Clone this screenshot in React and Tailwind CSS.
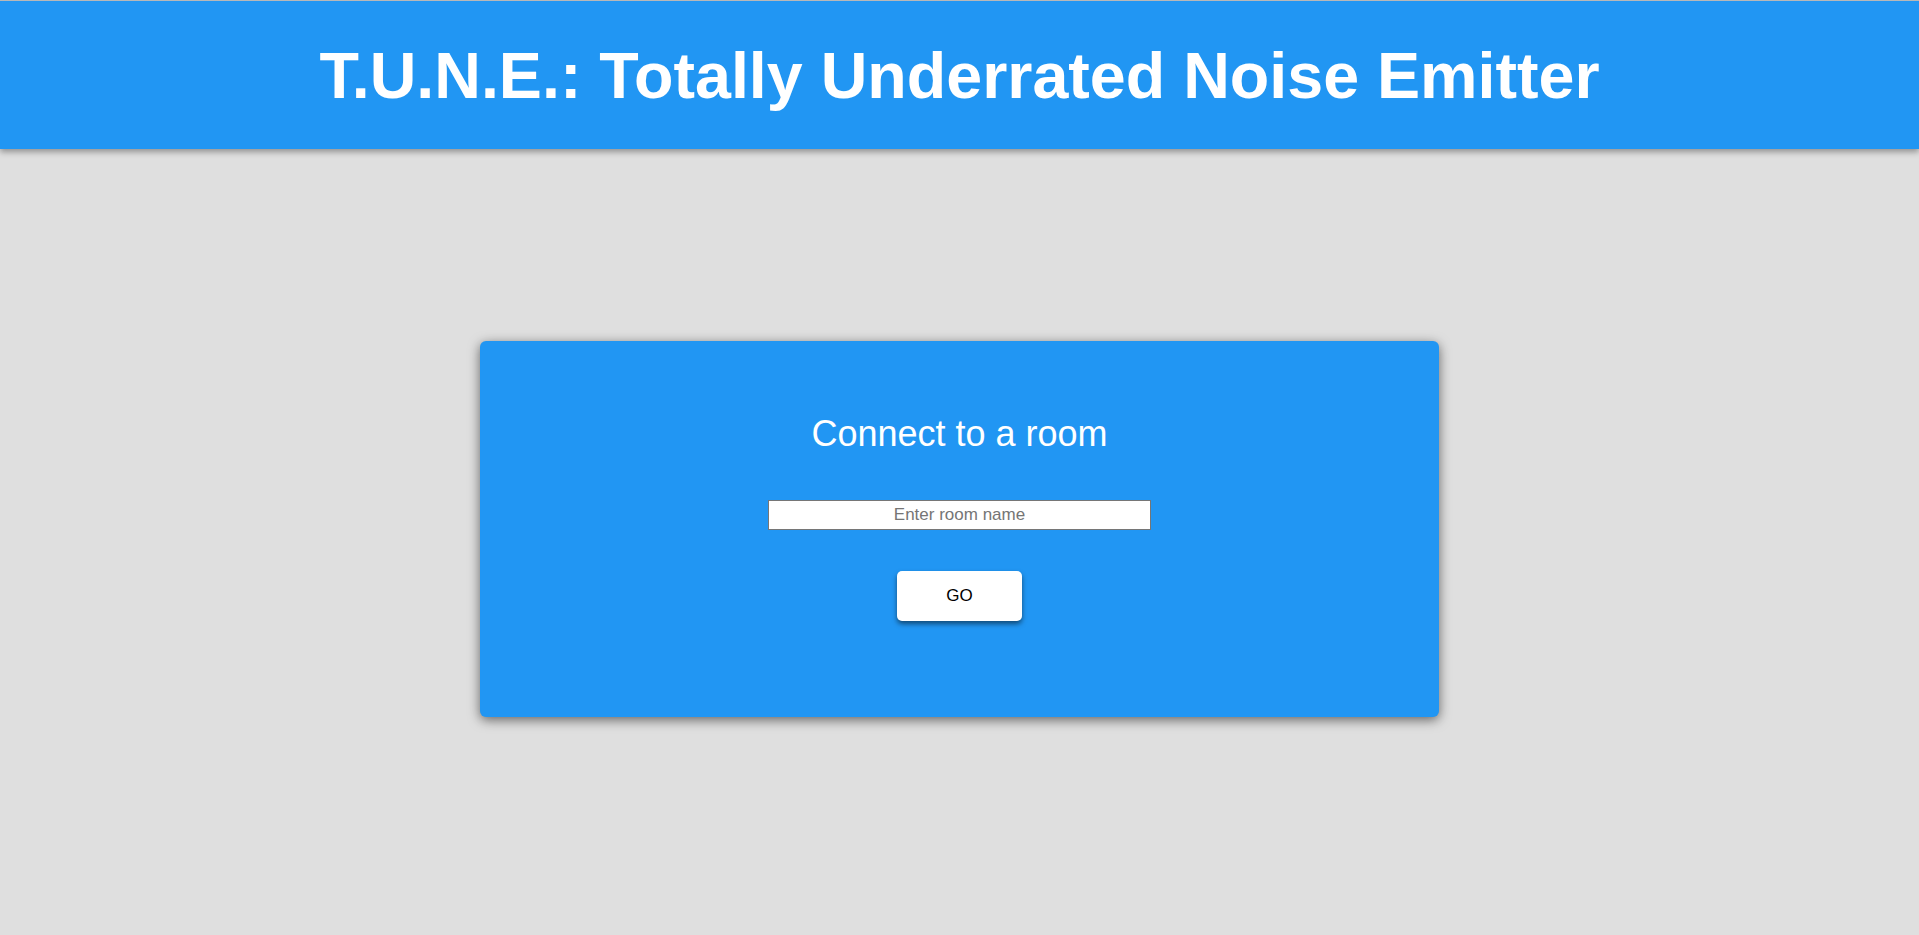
export default function App() {
  return (
    <div className="min-h-[935px] bg-[#dfdfdf] flex flex-col" style={{ fontFamily: '"Liberation Sans", Arial, sans-serif' }}>
      <header className="h-[149px] border-t border-[#b8b8b8] bg-[#2196f3] flex items-center justify-center pt-[2px] shadow-[0_3px_6px_rgba(0,0,0,0.35)] relative z-10">
        <h1 className="text-white font-bold text-[64.6px] leading-normal">T.U.N.E.: Totally Underrated Noise Emitter</h1>
      </header>
      <main className="flex justify-center pt-[192px]">
        <div className="w-[959px] h-[376px] bg-[#2196f3] rounded-[6px] shadow-[0_3px_12px_rgba(0,0,0,0.55)] flex flex-col items-center pt-[66px]">
          <h2 className="text-white text-[36px] leading-normal">Connect to a room</h2>
          <input
            type="text"
            placeholder="Enter room name"
            className="mt-[39px] w-[383px] h-[30px] bg-white border border-[#767676] text-center text-[17px] text-black placeholder:text-[#757575] outline-none"
          />
          <button className="mt-[41px] w-[125px] h-[50px] bg-white rounded-[5px] text-black text-[17px] shadow-[0_3px_5px_rgba(0,0,0,0.5)]">
            GO
          </button>
        </div>
      </main>
    </div>
  );
}
